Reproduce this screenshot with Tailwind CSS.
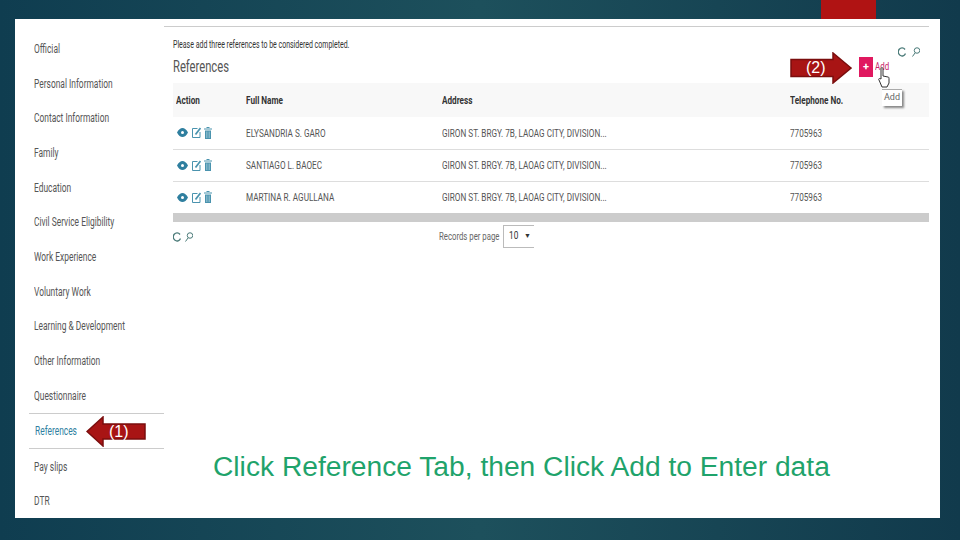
<!DOCTYPE html>
<html lang="en">
<head>
    <meta charset="UTF-8">
    <title>References</title>
    <script src="https://cdn.jsdelivr.net/npm/@tailwindcss/browser@4"></script>
</head>
<body class="w-[960px] h-[540px] overflow-hidden relative bg-gradient-to-r from-[#0f3d50] via-[#1d505c] to-[#113a4c] font-['Roboto',sans-serif]">

    <!-- Red tab on the top edge -->
    <div class="absolute left-[821px] top-0 w-[55px] h-[19px] bg-[#b01313]"></div>

    <!-- White slide panel -->
    <div class="absolute left-[15px] top-[19px] w-[925px] h-[499px] bg-white flex overflow-hidden">

        <!-- Sidebar -->
        <nav class="w-[135px] ml-[14px] shrink-0 pt-[12.5px] text-[12px] text-[#555]">
            <div class="h-[34.7px] flex items-center pl-[5px]"><span class="origin-left scale-x-[.7] whitespace-nowrap">Official</span></div>
            <div class="h-[34.7px] flex items-center pl-[5px]"><span class="origin-left scale-x-[.7] whitespace-nowrap">Personal Information</span></div>
            <div class="h-[34.7px] flex items-center pl-[5px]"><span class="origin-left scale-x-[.7] whitespace-nowrap">Contact Information</span></div>
            <div class="h-[34.7px] flex items-center pl-[5px]"><span class="origin-left scale-x-[.7] whitespace-nowrap">Family</span></div>
            <div class="h-[34.7px] flex items-center pl-[5px]"><span class="origin-left scale-x-[.7] whitespace-nowrap">Education</span></div>
            <div class="h-[34.7px] flex items-center pl-[5px]"><span class="origin-left scale-x-[.7] whitespace-nowrap">Civil Service Eligibility</span></div>
            <div class="h-[34.7px] flex items-center pl-[5px]"><span class="origin-left scale-x-[.7] whitespace-nowrap">Work Experience</span></div>
            <div class="h-[34.7px] flex items-center pl-[5px]"><span class="origin-left scale-x-[.7] whitespace-nowrap">Voluntary Work</span></div>
            <div class="h-[34.7px] flex items-center pl-[5px]"><span class="origin-left scale-x-[.7] whitespace-nowrap">Learning &amp; Development</span></div>
            <div class="h-[34.7px] flex items-center pl-[5px]"><span class="origin-left scale-x-[.7] whitespace-nowrap">Other Information</span></div>
            <div class="h-[34.2px] flex items-center pl-[5px] pt-[2px]"><span class="origin-left scale-x-[.7] whitespace-nowrap">Questionnaire</span></div>
            <div class="h-[36px] flex items-center pl-[6px] text-[#2f7f9f] border-y border-[#ccc]"><span class="origin-left scale-x-[.7] whitespace-nowrap">References</span></div>
            <div class="h-[37px] flex items-center pl-[5px]"><span class="origin-left scale-x-[.7] whitespace-nowrap">Pay slips</span></div>
            <div class="h-[30px] flex items-center pl-[5px]"><span class="origin-left scale-x-[.7] whitespace-nowrap">DTR</span></div>
        </nav>

        <!-- Main column -->
        <main class="flex-1 mt-[7px] mr-[11px] border-t border-[#ccc] min-w-0">
            <div class="ml-[9px]">
                <p class="text-[10.5px] leading-[14px] mt-[11px] text-[#333] origin-left scale-x-[.665] whitespace-nowrap">Please add three references to be considered completed.</p>
                <div class="flex items-center justify-between h-[26px] mt-[2px]">
                    <h2 class="text-[16px] text-[#555] origin-left scale-x-[.7] whitespace-nowrap">References</h2>
                    <div class="flex items-center w-[70px]">
                        <span class="w-[14px] h-[20px] bg-[#e0185f] text-white text-[11px] font-bold flex items-center justify-center">+</span>
                        <span class="ml-[2px] text-[11px] text-[#c8246a] origin-left scale-x-[.72]">Add</span>
                    </div>
                </div>

                <table class="w-full mt-[3px] text-[11.5px] text-[#555] table-fixed whitespace-nowrap">
                    <thead>
                        <tr class="h-[34px] bg-[#f8f8f8] text-left text-[#333] font-bold">
                            <th class="w-[73px] pl-[3px] pt-[2px]"><span class="inline-block origin-left scale-x-[.71]">Action</span></th>
                            <th class="w-[196px] pt-[2px]"><span class="inline-block origin-left scale-x-[.71]">Full Name</span></th>
                            <th class="w-[348px] pt-[2px]"><span class="inline-block origin-left scale-x-[.71]">Address</span></th>
                            <th class="pt-[2px]"><span class="inline-block origin-left scale-x-[.71]">Telephone No.</span></th>
                        </tr>
                    </thead>
                    <tbody>
                        <tr class="h-[32px] border-b border-[#ddd]">
                            <td class="pl-[4px]">
                                <div class="flex items-center text-[#2f7f9f]">
                                    <svg width="11" height="9" viewBox="0 0 22 18"><path fill="currentColor" fill-rule="evenodd" d="M0 9C3 3 7 0 11 0s8 3 11 9c-3 6-7 9-11 9S3 15 0 9zm11-3a3 3 0 1 0 0 6 3 3 0 0 0 0-6z"/></svg>
                                    <svg class="ml-[4px]" width="9" height="11" viewBox="0 0 18 22" fill="none" stroke="#4a93ae" stroke-width="2"><path d="M11 3H1v18h15V10"/><path stroke-width="3.5" d="M7 15L17 2"/></svg>
                                    <svg class="ml-[3px]" width="8" height="12" viewBox="0 0 16 24" fill="#4a93ae"><path d="M0 3h16v2H0zM5 0h6v2H5zM2 7h12v17H2z"/><path fill="#b9d8e2" d="M5 9h1.5v13H5zM9.500 9H11v13H9.500z"/></svg>
                                </div>
                            </td>
                            <td class="pt-[2px]"><span class="inline-block origin-left scale-x-[.71]">ELYSANDRIA S. GARO</span></td>
                            <td class="pt-[2px]"><span class="inline-block origin-left scale-x-[.71]">GIRON ST. BRGY. 7B, LAOAG CITY, DIVISION...</span></td>
                            <td class="pt-[2px]"><span class="inline-block origin-left scale-x-[.71]">7705963</span></td>
                        </tr>
                        <tr class="h-[32px] border-b border-[#ddd]">
                            <td class="pl-[4px]">
                                <div class="flex items-center text-[#2f7f9f]">
                                    <svg width="11" height="9" viewBox="0 0 22 18"><path fill="currentColor" fill-rule="evenodd" d="M0 9C3 3 7 0 11 0s8 3 11 9c-3 6-7 9-11 9S3 15 0 9zm11-3a3 3 0 1 0 0 6 3 3 0 0 0 0-6z"/></svg>
                                    <svg class="ml-[4px]" width="9" height="11" viewBox="0 0 18 22" fill="none" stroke="#4a93ae" stroke-width="2"><path d="M11 3H1v18h15V10"/><path stroke-width="3.5" d="M7 15L17 2"/></svg>
                                    <svg class="ml-[3px]" width="8" height="12" viewBox="0 0 16 24" fill="#4a93ae"><path d="M0 3h16v2H0zM5 0h6v2H5zM2 7h12v17H2z"/><path fill="#b9d8e2" d="M5 9h1.5v13H5zM9.500 9H11v13H9.500z"/></svg>
                                </div>
                            </td>
                            <td class="pt-[2px]"><span class="inline-block origin-left scale-x-[.71]">SANTIAGO L. BAOEC</span></td>
                            <td class="pt-[2px]"><span class="inline-block origin-left scale-x-[.71]">GIRON ST. BRGY. 7B, LAOAG CITY, DIVISION...</span></td>
                            <td class="pt-[2px]"><span class="inline-block origin-left scale-x-[.71]">7705963</span></td>
                        </tr>
                        <tr class="h-[32px]">
                            <td class="pl-[4px]">
                                <div class="flex items-center text-[#2f7f9f]">
                                    <svg width="11" height="9" viewBox="0 0 22 18"><path fill="currentColor" fill-rule="evenodd" d="M0 9C3 3 7 0 11 0s8 3 11 9c-3 6-7 9-11 9S3 15 0 9zm11-3a3 3 0 1 0 0 6 3 3 0 0 0 0-6z"/></svg>
                                    <svg class="ml-[4px]" width="9" height="11" viewBox="0 0 18 22" fill="none" stroke="#4a93ae" stroke-width="2"><path d="M11 3H1v18h15V10"/><path stroke-width="3.5" d="M7 15L17 2"/></svg>
                                    <svg class="ml-[3px]" width="8" height="12" viewBox="0 0 16 24" fill="#4a93ae"><path d="M0 3h16v2H0zM5 0h6v2H5zM2 7h12v17H2z"/><path fill="#b9d8e2" d="M5 9h1.5v13H5zM9.500 9H11v13H9.500z"/></svg>
                                </div>
                            </td>
                            <td><span class="inline-block origin-left scale-x-[.71]">MARTINA R. AGULLANA</span></td>
                            <td><span class="inline-block origin-left scale-x-[.71]">GIRON ST. BRGY. 7B, LAOAG CITY, DIVISION...</span></td>
                            <td><span class="inline-block origin-left scale-x-[.71]">7705963</span></td>
                        </tr>
                    </tbody>
                </table>

                <div class="h-[9px] bg-[#ccc]"></div>

                <div class="flex items-center h-[27px] mt-[1px]">
                    <div class="flex items-center gap-[4px] text-[#4a7a78] w-[19px]">
                        <svg class="shrink-0" width="8" height="10" viewBox="0 0 16 20" fill="none" stroke="currentColor" stroke-width="2.6"><path d="M14 5a7.500 8 0 1 0 1 8"/></svg>
                        <svg class="shrink-0" width="8" height="10" viewBox="0 0 16 20" fill="none" stroke="currentColor" stroke-width="2"><circle cx="10" cy="7" r="5.500"/><path d="M6 12l-5 7"/></svg>
                    </div>
                    <span class="ml-[247px] w-[64px] text-[10.5px] text-[#666] origin-left scale-x-[.74] whitespace-nowrap">Records per page</span>
                    <div class="w-[31px] h-[23px] border border-r-0 border-[#bbb] flex items-center justify-between pl-[5px] pr-[3px] text-[11px] text-[#333]">
                        <span class="origin-left scale-x-[.75]">10</span><span class="text-[7px]">▼</span>
                    </div>
                </div>

                <p class="ml-[40px] mt-[200px] text-[28.2px] leading-[32px] text-[#1fa36b] font-['Liberation_Sans',sans-serif] whitespace-nowrap">Click Reference Tab, then Click Add to Enter data</p>
            </div>
        </main>
    </div>

    <!-- Callout arrow (1) -->
    <div class="absolute left-[86px] top-[416px] w-[60px] h-[31px]">
        <svg class="absolute inset-0" width="60" height="31" viewBox="0 0 60 31"><path d="M1 15.500L17 1v7h42v15H17v7z" fill="#a81414" stroke="#7a0d0d" stroke-width="1.500"/></svg>
        <span class="absolute left-[23px] top-[7px] text-[16px] leading-[18px] text-white font-['Liberation_Sans',sans-serif]">(1)</span>
    </div>

    <!-- Callout arrow (2) -->
    <div class="absolute left-[790px] top-[52px] w-[62px] h-[32px]">
        <svg class="absolute inset-0" width="62" height="32" viewBox="0 0 62 32"><path d="M61 16L43 1v6.500H1v17h42V31z" fill="#a81414" stroke="#7a0d0d" stroke-width="1.500"/></svg>
        <span class="absolute left-[16px] top-[7px] text-[16px] leading-[18px] text-white font-['Liberation_Sans',sans-serif]">(2)</span>
    </div>

    <!-- Search / refresh top right -->
    <div class="absolute left-[898px] top-[47px] flex items-center gap-[6px] text-[#4a7a78]">
        <svg width="8" height="10" viewBox="0 0 16 20" fill="none" stroke="currentColor" stroke-width="2.6"><path d="M14 5a7.500 8 0 1 0 1 8"/></svg>
        <svg width="8" height="10" viewBox="0 0 16 20" fill="none" stroke="currentColor" stroke-width="2"><circle cx="10" cy="7" r="5.500"/><path d="M6 12l-5 7"/></svg>
    </div>

    <!-- Pointer and tooltip -->
    <svg class="absolute left-[878px] top-[67px]" width="12" height="21" viewBox="0 0 12 21" fill="#fff" stroke="#333" stroke-width="1"><path d="M3 2c0-2 2-2 2 0v7l5 1c1 0 1 1 1 2v4l-2 4H4L1 13c-1-1 0-2 2-1z"/></svg>
    <div class="absolute left-[882px] top-[89px] w-[20px] h-[17px] bg-white border-t border-[#aaa] shadow-[2px_2px_2px_#888] text-[9px] leading-[15px] text-center text-[#666]">Add</div>
</body>
</html>
